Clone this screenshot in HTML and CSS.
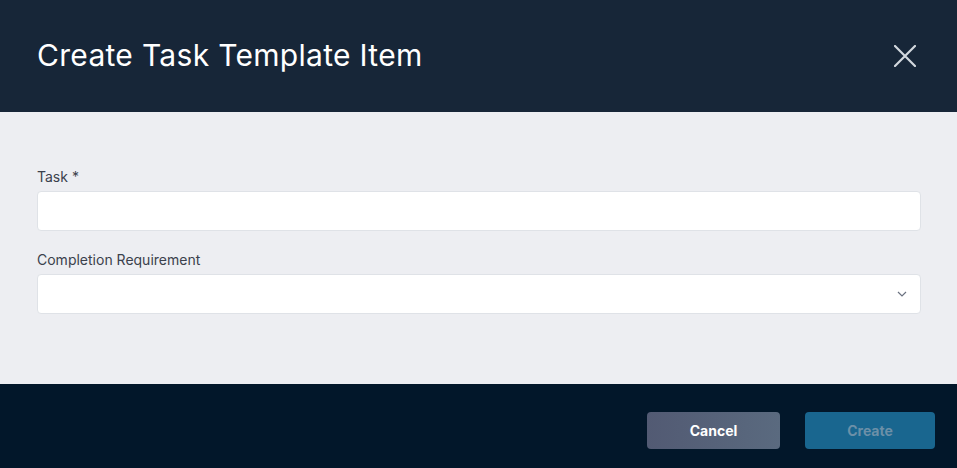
FILE: index.html
```html
<!DOCTYPE html>
<html>
<head>
<meta charset="utf-8">
<link rel="stylesheet" href="styles.css">
</head>
<body>
<div class="modal">
  <header class="modal-header">
    <h1 class="title">Create Task Template Item</h1>
    <button class="close" aria-label="Close">
      <svg width="22" height="22" viewBox="0 0 22 22"><path d="M1 1 L21 21 M21 1 L1 21" stroke="#d3d8de" stroke-width="2.2" stroke-linecap="round"/></svg>
    </button>
  </header>
  <main class="modal-body">
    <div class="field">
      <label class="label">Task *</label>
      <div class="input"></div>
    </div>
    <div class="field">
      <label class="label">Completion Requirement</label>
      <div class="input select">
        <svg width="10" height="6" viewBox="0 0 10 6"><path d="M1 1 L5 5 L9 1" fill="none" stroke="#6b7280" stroke-width="1.2"/></svg>
      </div>
    </div>
  </main>
  <footer class="modal-footer">
    <button class="btn cancel">Cancel</button>
    <button class="btn create">Create</button>
  </footer>
</div>
</body>
</html>
```
FILE: styles.css
```css
html, body { margin: 0; padding: 0; }
body { width: 957px; height: 468px; overflow: hidden; font-family: Inter, "Noto Sans", sans-serif; }
.modal { display: flex; flex-direction: column; height: 468px; }
.modal-header {
  height: 112px; background: #172638; display: flex; align-items: center;
  justify-content: space-between; padding: 0 41px 0 37px; box-sizing: border-box;
}
.title { margin: 0; color: #ffffff; font-weight: 400; font-size: 30px; letter-spacing: 0.3px; position: relative; top: -1px; }
.close { background: none; border: 0; padding: 0; width: 22px; height: 22px; display: flex; cursor: pointer; }
.modal-body {
  height: 272px; background: #edeef2; box-sizing: border-box;
  padding: 56px 36px 0 37px;
  display: flex; flex-direction: column; gap: 20px;
}
.field { display: flex; flex-direction: column; gap: 5px; }
.label { font-size: 14px; color: #3b414c; line-height: 18px; }
.input {
  height: 40px; background: #fff; border: 1px solid #dfe2e7; border-radius: 4px; box-sizing: border-box;
}
.select { display: flex; align-items: center; justify-content: flex-end; padding-right: 13px; }
.modal-footer {
  flex: 1; background: #02172a; display: flex; justify-content: flex-end; align-items: flex-start;
  padding: 28px 22px 0 0; gap: 25px; box-sizing: border-box;
}
.btn { height: 37px; border: 0; border-radius: 4px; font-family: Inter, sans-serif; font-weight: 700; font-size: 14px; }
.cancel { width: 133px; background: linear-gradient(90deg, #525a73, #5a6a7f); color: #ffffff; }
.create { width: 130px; background: #19668f; color: #6c90a8; }
```
